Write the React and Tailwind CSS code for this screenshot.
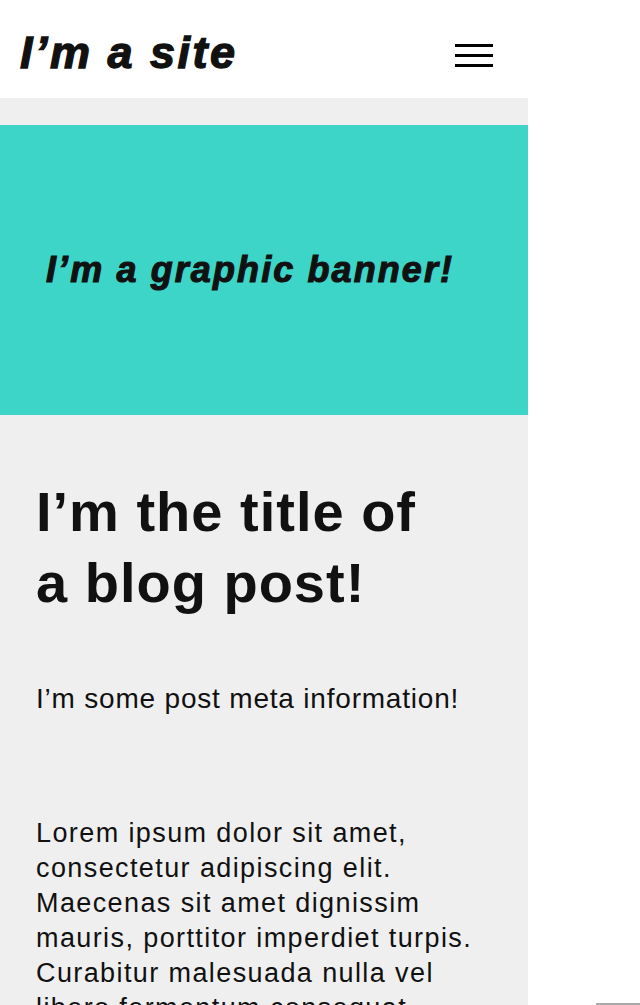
import React from "react";

const Header = () => {
  return (
    <header className="flex items-center justify-between bg-white h-[98px] pl-5 pr-[35px]">
      <h1 className="text-[45px] leading-none font-bold italic tracking-[2.5px] text-[#111] pt-[6px] [-webkit-text-stroke:1.3px_#111]">
        I’m a site
      </h1>
      <button className="flex flex-col gap-[7px] w-[38px] mt-[12px]" aria-label="Menu">
        <span className="block h-[3px] bg-black" />
        <span className="block h-[3px] bg-black" />
        <span className="block h-[3px] bg-black" />
      </button>
    </header>
  );
};

const App = () => {
  return (
    <div className="min-h-[1005px] bg-white font-['Liberation_Sans',Arial,sans-serif]">
      <div className="w-[528px] bg-[#efefef] h-[1005px] overflow-hidden">
        <Header />
        <div className="h-[27px]" />
        <section className="h-[290px] bg-[#3dd5c8] flex items-center pl-[46px]">
          <h2 className="text-[36px] font-bold italic tracking-[2.1px] text-[#111] leading-none [-webkit-text-stroke:1.1px_#111]">
            I’m a graphic banner!
          </h2>
        </section>
        <article className="px-9 pt-[61px] text-[#111]">
          <h2 className="max-w-[400px] text-[56px] leading-[71px] font-bold tracking-[1px]">
            I’m the title of a blog post!
          </h2>
          <p className="mt-[63px] text-[28px] leading-[35px] tracking-[0.8px]">
            I’m some post meta information!
          </p>
          <p className="mt-[100px] text-[27px] leading-[35px] tracking-[1.4px]">
            Lorem ipsum dolor sit amet, consectetur adipiscing elit. Maecenas sit amet dignissim
            mauris, porttitor imperdiet turpis. Curabitur malesuada nulla vel libero fermentum
            consequat. Integer posuere ipsum at nisl lacinia.
          </p>
        </article>
      </div>
      <div className="fixed right-0 bottom-0 w-[44px] h-[2px] bg-[#aaa]" />
    </div>
  );
};

export default App;
